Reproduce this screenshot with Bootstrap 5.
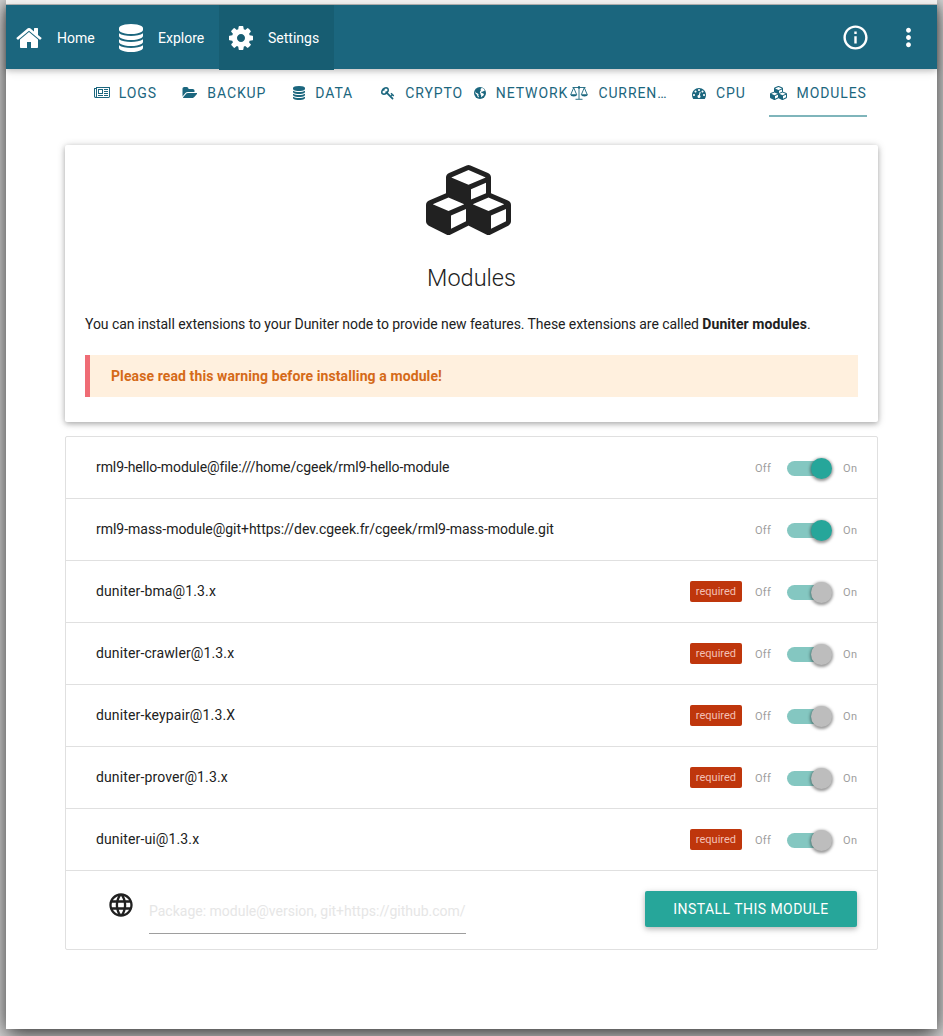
<!DOCTYPE html>
<html lang="en">
<head>
<meta charset="utf-8">
<meta name="viewport" content="width=device-width, initial-scale=1">
<title>Duniter - Modules</title>
<link href="https://cdn.jsdelivr.net/npm/bootstrap@5.3.0/dist/css/bootstrap.min.css" rel="stylesheet">
<style>
body{font-family:Roboto,sans-serif;font-size:14px;line-height:21px;color:#212121;background:#d8d8d8;height:1036px;overflow:hidden}
svg{fill:currentColor;display:block;flex:none}
.win{height:1029px;margin:0 6px;background:#fff;box-shadow:0 5px 20px rgba(0,0,0,.8)}
.chrome{height:5px;background:#f2f1f0;border-bottom:1px solid #b9b8b7}
.topbar{height:64px;background:#1b667e;box-shadow:0 2px 5px rgba(0,0,0,.16),0 2px 10px rgba(0,0,0,.12);--bs-navbar-padding-y:0}
.topbar a{color:#fff;text-decoration:none;height:65px;padding-right:15px}
.topbar .t{line-height:64px}
.on-page{background:#175d72;margin-bottom:-1px}
.tabbar{display:grid;grid-template-columns:repeat(8,98.9px);margin-left:70px;height:48px;line-height:46px}
.tabbar a{color:#1b667e;text-decoration:none;letter-spacing:.9px;gap:10px;white-space:nowrap;height:46px;margin-top:1px}
.tabbar a:first-child{gap:9px}
.tabbar a:nth-child(6){padding-right:2px}
.tabbar .sel{border-bottom:2px solid #7fb5bb;margin-left:1px;padding-top:1px;height:47px}
.box{width:813px;margin:28px 0 0 59px;height:277px;padding:20px;border-radius:2px;box-shadow:0 2px 5px rgba(0,0,0,.2),0 1px 8px rgba(0,0,0,.2);background:#fff}
.box h5{font-size:23.5px;font-weight:300;line-height:26px;margin:30px 0 23px}
.intro{letter-spacing:-.06px}
.intro b{letter-spacing:.07px}
.warnbar{height:42px;margin-top:20px;background:#fff0de;border-left:5px solid #ef6c75;color:#d56a18;padding-left:21px;font-weight:700;letter-spacing:.1px}
.mods{width:813px;margin:14px 0 0 59px;border:1px solid #e0e0e0;border-radius:2px;padding:0}
.mods li{list-style:none;height:62px;border-bottom:1px solid #e0e0e0;padding:0 20px 0 30px}
.mods li:last-child{height:78px;border:0}
.mods .me-auto{letter-spacing:.13px}
.mods li:nth-child(1) .me-auto{letter-spacing:-.1px}
.mods li:nth-child(2) .me-auto{letter-spacing:-.025px}
.req{background:#bf360c;color:#f3c0b5;font-size:11px;width:52px;height:21px;border-radius:2px;line-height:21px;text-align:center;margin-right:13px}
.sw{font-size:11px;color:#9e9e9e;letter-spacing:.3px;padding-top:2px;margin-right:-.3px}
.lever{width:40px;height:15px;border-radius:15px;background:#84c7c1;margin:0 16px}
.lever i{display:block;width:21px;height:21px;border-radius:50%;background:#26a69a;margin:-3px 0 0 24px;box-shadow:0 1px 3px 1px rgba(0,0,0,.4)}
.locked i{background:#bdbdbd}
.pkg{width:317px;height:45px;border:0;border-bottom:1px solid #9e9e9e;border-radius:0;padding:0;font-size:14px;margin:18px 0 0 14px;color:#212121;background:none;outline:0}
.pkg::placeholder{color:#e6e6e6;opacity:1}
.go{width:212px;height:36px;background:#26a69a;color:#fff;border:0;border-radius:2px;padding:0;font-size:14px;letter-spacing:.45px;margin-top:20px;box-shadow:0 2px 5px rgba(0,0,0,.2),0 2px 8px rgba(0,0,0,.12)}
</style>
</head>
<body>
<svg width="0" height="0" class="position-absolute">
<defs>
<symbol id="db" viewBox="128 0 1536 1792"><path d="M896 768q237 0 443-43t325-127v170q0 69-103 128t-280 93.500-385 34.500-385-34.500-280-93.500-103-128v-170q119 84 325 127t443 43zm0 768q237 0 443-43t325-127v170q0 69-103 128t-280 93.500-385 34.500-385-34.500-280-93.500-103-128v-170q119 84 325 127t443 43zm0-384q237 0 443-43t325-127v170q0 69-103 128t-280 93.500-385 34.500-385-34.500-280-93.500-103-128v-170q119 84 325 127t443 43zm0-1152q208 0 385 34.500t280 93.500 103 128v128q0 69-103 128t-280 93.500-385 34.500-385-34.500-280-93.500-103-128v-128q0-69 103-128t280-93.500 385-34.500z"/></symbol>
<symbol id="cubes" viewBox="0 0 2176 1792"><path d="M640 1632l384-192v-314l-384 164v342zm-64-454l404-173-404-173-404 173zm1088 454l384-192v-314l-384 164v342zm-64-454l404-173-404-173-404 173zm-448-293l384-165v-266l-384 164v267zm-64-379l441-189-441-189-441 189zm1088 518v416q0 36-19 67t-52 47l-448 224q-25 14-57 14t-57-14l-448-224q-4-2-7-4-2 2-7 4l-448 224q-25 14-57 14t-57-14l-448-224q-33-16-52-47t-19-67v-416q0-38 21.500-70t56.500-48l434-186v-400q0-38 21.500-70t56.500-48l448-192q23-10 50-10t50 10l448 192q35 16 56.500 48t21.500 70v400l434 186q36 16 57 48t21 70z"/></symbol>
</defs>
</svg>
<div class="win">
  <div class="chrome"></div>
  <nav class="navbar topbar d-flex align-items-start justify-content-start flex-nowrap">
    <a href="#" class="d-flex align-items-center" style="padding-left:9px"><svg width="28" height="28" viewBox="0 0 1792 1792"><path d="M1472 992v480q0 26-19 45t-45 19h-384v-384h-256v384h-384q-26 0-45-19t-19-45v-480q0-1 .5-3t.5-3l575-474 575 474q1 2 1 6zm223-69l-62 74q-8 9-21 11h-3q-13 0-21-7l-692-577-692 577q-12 8-24 7-13-2-21-11l-62-74q-8-10-7-23.500t11-21.500l719-599q32-26 76-26t76 26l244 204v-195q0-14 9-23t23-9h192q14 0 23 9t9 23v408l219 182q10 8 11 21.500t-7 23.500z"/></svg><span class="t" style="width:37px;margin-left:14px">Home</span></a>
    <a href="#" class="d-flex align-items-center" style="padding-left:10px"><svg width="24" height="28"><use href="#db"/></svg><span class="t" style="width:46px;margin-left:15px">Explore</span></a>
    <a href="#" class="d-flex align-items-center on-page" style="padding-left:10px"><svg width="24" height="24" viewBox="128 128 1536 1536"><path d="M1152 896q0-106-75-181t-181-75-181 75-75 181 75 181 181 75 181-75 75-181zm512-109v222q0 12-8 23t-20 13l-185 28q-19 54-39 91 35 50 107 138 10 12 10 25t-9 23q-27 37-99 108t-94 71q-12 0-26-9l-138-108q-44 23-91 38-16 136-29 186-7 28-36 28h-222q-14 0-24.500-8.500t-11.500-21.500l-28-184q-49-16-90-37l-141 107q-10 9-25 9-14 0-25-11-126-114-165-168-7-10-7-23 0-12 8-23 15-21 51-66.500t54-70.500q-27-50-41-99l-183-27q-13-2-21-12.500t-8-23.500v-222q0-12 8-23t19-13l186-28q14-46 39-92-40-57-107-138-10-12-10-24 0-10 9-23 26-36 98.500-107.500t94.500-71.500q13 0 26 10l138 107q44-23 91-38 16-136 29-186 7-28 36-28h222q14 0 24.500 8.500t11.500 21.500l28 184q49 16 90 37l142-107q9-9 24-9 13 0 25 10 129 119 165 170 7 8 7 22 0 12-8 23-15 21-51 66.500t-54 70.500q26 50 41 98l183 28q13 2 21 12.500t8 23.500z"/></svg><span class="t" style="width:51px;margin-left:15px">Settings</span></a>
    <a href="#" class="d-flex align-items-center ms-auto" style="padding-right:24px" aria-label="About"><svg width="29" height="29" viewBox="0 0 24 24"><path d="M11 17h2v-6h-2v6zm1-15C6.480 2 2 6.480 2 12s4.480 10 10 10 10-4.480 10-10S17.520 2 12 2zm0 18c-4.410 0-8-3.590-8-8s3.590-8 8-8 8 3.590 8 8-3.590 8-8 8zM11 9h2V7h-2v2z"/></svg></a>
    <a href="#" class="d-flex align-items-center" style="padding-right:14px" aria-label="More"><svg width="29" height="29" viewBox="0 0 24 24"><path d="M12 8c1.100 0 2-.9 2-2s-.9-2-2-2-2 .9-2 2 .9 2 2 2zm0 2c-1.100 0-2 .9-2 2s.9 2 2 2 2-.9 2-2-.9-2-2-2zm0 6c-1.100 0-2 .9-2 2s.9 2 2 2 2-.9 2-2-.9-2-2-2z"/></svg></a>
  </nav>

  <div class="tabbar">
    <a href="#" class="d-flex align-items-center justify-content-center"><svg width="16" height="14" viewBox="0 0 2048 1792"><path d="M1024 512h-384v384h384v-384zm128 640v128h-640v-128h640zm0-768v640h-640v-640h640zm640 768v128h-512v-128h512zm0-256v128h-512v-128h512zm0-256v128h-512v-128h512zm0-256v128h-512v-128h512zm-1536 960v-960h-128v960q0 26 19 45t45 19 45-19 19-45zm1664 0v-1088h-1536v1088q0 33-11 64h1483q26 0 45-19t19-45zm128-1216v1216q0 80-56 136t-136 56h-1664q-80 0-136-56t-56-136v-1088h256v-128h1792z"/></svg><span>LOGS</span></a>
    <a href="#" class="d-flex align-items-center justify-content-center"><svg width="15" height="14" viewBox="0 0 1920 1792"><path d="M1943 952q0 31-31 66l-336 396q-43 51-120.500 86.500t-143.500 35.500h-1088q-34 0-60.500-13t-26.500-43q0-31 31-66l336-396q43-51 120.500-86.500t143.500-35.500h1088q34 0 60.500 13t26.500 43zm-343-344v160h-832q-94 0-197 47.500t-164 119.500l-337 396-5 6q0-4-.5-12.500t-.5-12.500v-960q0-92 66-158t158-66h320q92 0 158 66t66 158v32h544q92 0 158 66t66 158z"/></svg><span>BACKUP</span></a>
    <a href="#" class="d-flex align-items-center justify-content-center"><svg width="12" height="14"><use href="#db"/></svg><span>DATA</span></a>
    <a href="#" class="d-flex align-items-center justify-content-center"><svg width="14" height="14" viewBox="0 0 1792 1792"><path d="M832 512q0-80-56-136t-136-56-136 56-56 136q0 42 19 83-41-19-83-19-80 0-136 56t-56 136 56 136 136 56 136-56 56-136q0-42-19-83 41 19 83 19 80 0 136-56t56-136zm851 704q0 17-49 66t-66 49q-9 0-28.500-16t-36.500-33-38.500-40-24.500-26l-96 96 220 220q28 28 28 68 0 42-39 81t-81 39q-40 0-68-28l-671-671q-176 131-365 131-163 0-265.500-102.500t-102.500-265.500q0-160 95-313t248-248 313-95q163 0 265.500 102.500t102.500 265.500q0 189-131 365l355 355 96-96q-3-3-26-24.500t-40-38.500-33-36.500-16-28.500q0-17 49-66t66-49q13 0 23 10 6 6 46 44.500t82 79.500 86.500 86 73 78 28.500 41z"/></svg><span>CRYPTO</span></a>
    <a href="#" class="d-flex align-items-center justify-content-center"><svg width="12" height="14" viewBox="0 0 12 14"><circle cx="6" cy="7" r="6"/><path fill="#fff" d="M7 2.300l1.300-.4 1.700 1.200.8 1.600-1.200.2-.7.800-.9-.2-.9.800.6.8 1.300.2 1 .9-.6 1.300-1.400.9-.4.900-.5-.3.100-1.400-.7-1.100.1-1-.8-.7.300-1.300.8-.9-.4-.9zM1.300 5.200l.8 1.500 1.600.8.9.8-.3 1.100.6 1.100-.3.900-1.200-1.100-.4-1.500-1.500-1.400z"/></svg><span>NETWORK</span></a>
    <a href="#" class="d-flex align-items-center justify-content-center"><svg width="18" height="14" viewBox="0 0 18 14"><path d="M2.500 1.500h13M9 0v13M5.500 13.300h7M3.700 1.700L.8 8.500M3.700 1.700l2.900 6.800M14.300 1.700l-2.900 6.800M14.300 1.700l2.900 6.800" fill="none" stroke="currentColor" stroke-width=".9"/><path d="M.1 8.300h7.100q-.4 2.200-3.500 2.200T.1 8.300zM10.800 8.300h7.100q-.4 2.200-3.500 2.200t-3.600-2.200z"/><circle cx="9" cy="1.500" r="1.200"/></svg><span>CURREN…</span></a>
    <a href="#" class="d-flex align-items-center justify-content-center"><svg width="14" height="14" viewBox="0 0 1792 1792"><path d="M384 1152q0-53-37.500-90.500t-90.500-37.500-90.500 37.500-37.500 90.500 37.500 90.500 90.500 37.500 90.500-37.500 37.500-90.500zm192-448q0-53-37.500-90.500t-90.500-37.500-90.500 37.500-37.500 90.500 37.500 90.500 90.500 37.500 90.500-37.500 37.500-90.500zm428 481l101-382q6-26-7.500-48.500t-38.500-29.500-48 6.500-30 39.500l-101 382q-60 5-107 43.500t-63 98.500q-20 77 20 146t117 89 146-20 89-117q16-60-6-117t-72-91zm660-33q0-53-37.500-90.500t-90.500-37.500-90.500 37.500-37.500 90.500 37.500 90.500 90.500 37.500 90.500-37.500 37.500-90.500zm-640-640q0-53-37.500-90.500t-90.500-37.500-90.500 37.500-37.500 90.500 37.500 90.500 90.500 37.500 90.500-37.500 37.500-90.500zm448 192q0-53-37.500-90.500t-90.500-37.500-90.500 37.500-37.500 90.500 37.500 90.500 90.500 37.500 90.500-37.500 37.500-90.500zm320 448q0 261-141 483-19 29-54 29h-1402q-35 0-54-29-141-221-141-483 0-182 71-348t191-286 286-191 348-71 348 71 286 191 191 286 71 348z"/></svg><span>CPU</span></a>
    <a href="#" class="d-flex align-items-center justify-content-center sel"><svg width="17" height="14"><use href="#cubes"/></svg><span>MODULES</span></a>
  </div>

  <section class="box">
    <svg width="85" height="70" class="mx-auto" style="transform:translateX(-3px)"><use href="#cubes"/></svg>
    <h5 class="text-center">Modules</h5>
    <p class="m-0 intro">You can install extensions to your Duniter node to provide new features. These extensions are called <b>Duniter modules</b>.</p>
    <div class="warnbar d-flex align-items-center">Please read this warning before installing a module!</div>
  </section>

  <ul class="mods">
    <li class="d-flex align-items-center"><span class="me-auto">rml9-hello-module@file:///home/cgeek/rml9-hello-module</span><span class="sw d-flex align-items-center">Off<span class="lever"><i></i></span>On</span></li>
    <li class="d-flex align-items-center"><span class="me-auto">rml9-mass-module@git+https://dev.cgeek.fr/cgeek/rml9-mass-module.git</span><span class="sw d-flex align-items-center">Off<span class="lever"><i></i></span>On</span></li>
    <li class="d-flex align-items-center"><span class="me-auto">duniter-bma@1.3.x</span><span class="req">required</span><span class="sw d-flex align-items-center">Off<span class="lever locked"><i></i></span>On</span></li>
    <li class="d-flex align-items-center"><span class="me-auto">duniter-crawler@1.3.x</span><span class="req">required</span><span class="sw d-flex align-items-center">Off<span class="lever locked"><i></i></span>On</span></li>
    <li class="d-flex align-items-center"><span class="me-auto">duniter-keypair@1.3.X</span><span class="req">required</span><span class="sw d-flex align-items-center">Off<span class="lever locked"><i></i></span>On</span></li>
    <li class="d-flex align-items-center"><span class="me-auto">duniter-prover@1.3.x</span><span class="req">required</span><span class="sw d-flex align-items-center">Off<span class="lever locked"><i></i></span>On</span></li>
    <li class="d-flex align-items-center"><span class="me-auto">duniter-ui@1.3.x</span><span class="req">required</span><span class="sw d-flex align-items-center">Off<span class="lever locked"><i></i></span>On</span></li>
    <li class="d-flex align-items-start">
      <svg width="28" height="28" viewBox="0 0 24 24" style="margin:20px 0 0 11px"><path d="M11.990 2C6.470 2 2 6.480 2 12s4.470 10 9.990 10C17.520 22 22 17.520 22 12S17.520 2 11.990 2zm6.930 6h-2.950c-.32-1.250-.78-2.450-1.380-3.560 1.840.63 3.370 1.910 4.330 3.560zM12 4.040c.83 1.200 1.480 2.530 1.910 3.960h-3.820c.43-1.430 1.080-2.760 1.910-3.960zM4.260 14C4.100 13.360 4 12.690 4 12s.1-1.360.26-2h3.380c-.08.66-.14 1.320-.14 2 0 .68.06 1.340.14 2H4.260zm.82 2h2.950c.32 1.250.78 2.450 1.380 3.560-1.840-.63-3.370-1.900-4.330-3.560zm2.950-8H5.080c.96-1.660 2.490-2.930 4.330-3.560C8.810 5.550 8.350 6.750 8.030 8zM12 19.960c-.83-1.200-1.480-2.530-1.910-3.960h3.820c-.43 1.430-1.080 2.760-1.910 3.960zM14.340 14H9.660c-.09-.66-.16-1.320-.16-2 0-.68.07-1.350.16-2h4.680c.09.65.16 1.320.16 2 0 .68-.07 1.340-.16 2zm.25 5.560c.6-1.110 1.060-2.310 1.380-3.560h2.950c-.96 1.650-2.490 2.930-4.330 3.560zM16.360 14c.08-.66.14-1.320.14-2 0-.68-.06-1.340-.14-2h3.380c.16.64.26 1.310.26 2s-.1 1.360-.26 2h-3.380z"/></svg>
      <input class="pkg" placeholder="Package: module@version, git+https://github.com/" aria-label="Package">
      <button class="btn go ms-auto">INSTALL THIS MODULE</button>
    </li>
  </ul>
</div>
<script src="https://cdn.jsdelivr.net/npm/bootstrap@5.3.0/dist/js/bootstrap.bundle.min.js"></script>
</body>
</html>
